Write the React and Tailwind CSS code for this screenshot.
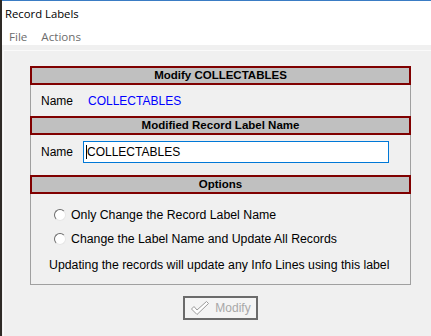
function Header({ children }) {
  return (
    <div className="h-[19px] -mx-px border-2 border-[#800000] bg-[#c0c0c0] flex items-center justify-center text-[11.5px] font-bold text-black leading-none">
      {children}
    </div>
  )
}

function Radio({ label }) {
  return (
    <div className="h-[24px] flex items-center pl-[23px]">
      <span className="w-[12px] h-[12px] rounded-full bg-white border border-[#6b6b6b] border-r-[#e6e6e6] border-b-[#e6e6e6]" />
      <span className="ml-[5px] text-[12.3px]">{label}</span>
    </div>
  )
}

export default function App() {
  return (
    <div
      className="w-[431px] h-[336px] overflow-hidden flex bg-[#f0f0f0] text-[12px] text-black"
      style={{ fontFamily: '"Liberation Sans", Arial, sans-serif' }}
    >
      {/* bit of the window behind */}
      <div className="w-[2px] shrink-0 bg-[#2e2a26]" />

      <div className="flex-1 flex flex-col">
        <div className="h-px bg-[#3a7cc4]" />
        {/* title bar */}
        <div
          className="h-[27px] bg-white flex items-center pl-[3px] text-[11.3px] text-black"
          style={{ fontFamily: '"Open Sans", "Noto Sans", sans-serif' }}
        >
          Record Labels
        </div>
        {/* menu */}
        <div
          className="h-[17px] bg-white flex items-center gap-[14px] pl-[7px] text-[11.6px] text-[#6d6d6d]"
          style={{ fontFamily: '"Open Sans", "Noto Sans", sans-serif' }}
        >
          <span>File</span>
          <span>Actions</span>
        </div>

        <div className="h-[5px]" />

        {/* panel */}
        <div className="flex-1 ml-px border-l border-t border-[#fafafa] pl-[26px] pt-[15px]">
          <div className="w-[381px] border-x border-b border-[#a0a0a0]">
            <Header>Modify COLLECTABLES</Header>
            <div className="h-[31px] flex items-center pl-[10px]">
              <span className="w-[47px]">Name</span>
              <span className="text-[#0000ff]">COLLECTABLES</span>
            </div>

            <Header>Modified Record Label Name</Header>
            <div className="flex items-center pl-[10px] pt-[6px] pb-[12px]">
              <span className="w-[42px]">Name</span>
              <div className="w-[306px] h-[22px] border border-[#0078d7] bg-white flex items-center pl-[2px]">
                <span className="w-px h-[14px] bg-black" />
                <span>COLLECTABLES</span>
              </div>
            </div>

            <Header>Options</Header>
            <div className="pt-[9px] pb-[5px]">
              <Radio label="Only Change the Record Label Name" />
              <Radio label="Change the Label Name and Update All Records" />
              <div className="h-[28px] flex items-center pl-[18px] text-[12.3px]">
                Updating the records will update any Info Lines using this label
              </div>
            </div>
          </div>

          <div className="w-[381px] flex justify-center mt-[11px]">
            <button
              disabled
              className="w-[75px] h-[24px] border-2 border-[#6b6b6b] bg-[#f4f4f4] flex items-center justify-center gap-[5px] text-[#a8a8a8] text-[12px]"
            >
              <svg width="20" height="16" viewBox="0 0 20 16">
                <path
                  d="M1.5 9 L4 6.5 L7 10 L16.5 1.5 L18.5 3.5 L7 14.5 Z"
                  fill="#ffffff"
                  stroke="#9a9a9a"
                  strokeWidth="1"
                  strokeLinejoin="round"
                />
              </svg>
              <span>Modify</span>
            </button>
          </div>
        </div>
      </div>
    </div>
  )
}
